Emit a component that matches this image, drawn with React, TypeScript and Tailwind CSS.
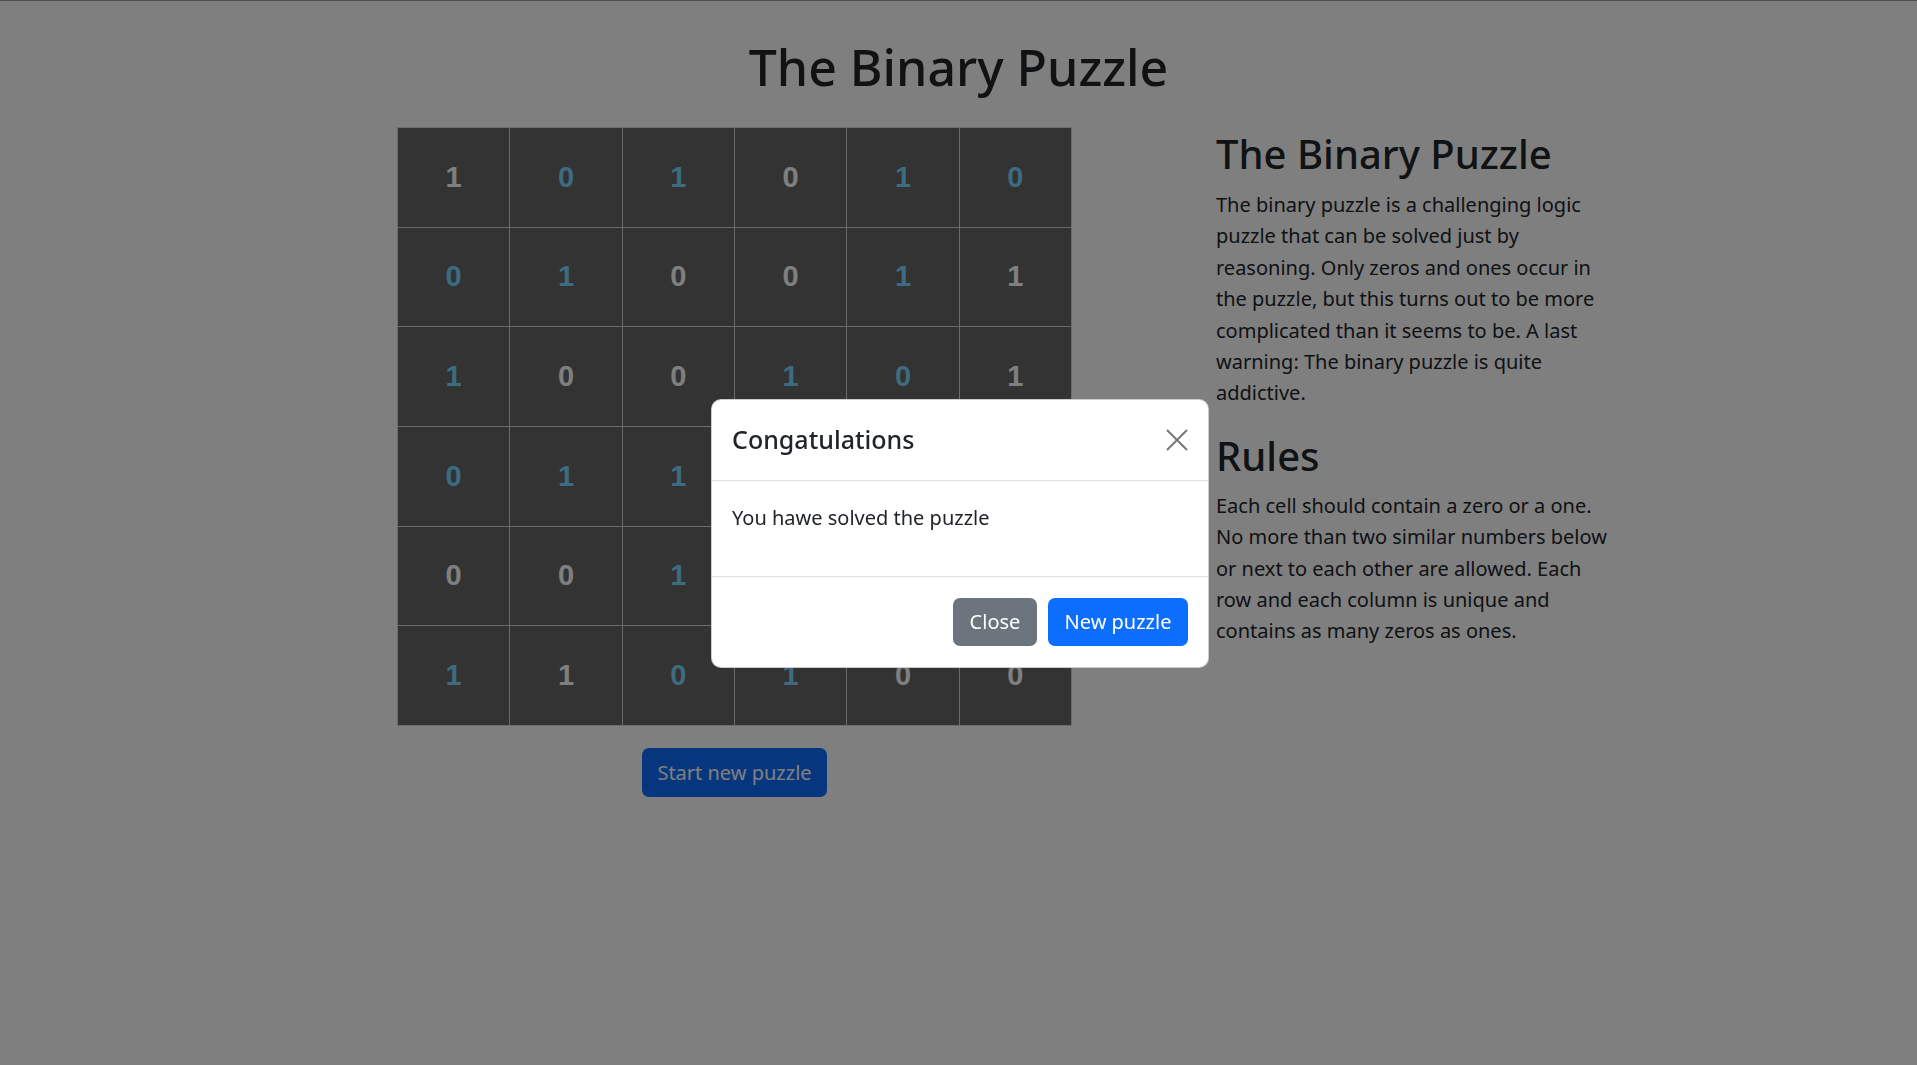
import React from "react";

type Cell = { v: number; fixed: boolean };

// fixed = given by the puzzle (white), otherwise filled in by the player (blue)
const board: Cell[][] = [
  [{ v: 1, fixed: true }, { v: 0, fixed: false }, { v: 1, fixed: false }, { v: 0, fixed: true }, { v: 1, fixed: false }, { v: 0, fixed: false }],
  [{ v: 0, fixed: false }, { v: 1, fixed: false }, { v: 0, fixed: true }, { v: 0, fixed: true }, { v: 1, fixed: false }, { v: 1, fixed: true }],
  [{ v: 1, fixed: false }, { v: 0, fixed: true }, { v: 0, fixed: true }, { v: 1, fixed: false }, { v: 0, fixed: false }, { v: 1, fixed: true }],
  [{ v: 0, fixed: false }, { v: 1, fixed: false }, { v: 1, fixed: false }, { v: 0, fixed: true }, { v: 1, fixed: false }, { v: 0, fixed: true }],
  [{ v: 0, fixed: true }, { v: 0, fixed: true }, { v: 1, fixed: false }, { v: 1, fixed: false }, { v: 0, fixed: true }, { v: 1, fixed: false }],
  [{ v: 1, fixed: false }, { v: 1, fixed: true }, { v: 0, fixed: false }, { v: 1, fixed: false }, { v: 0, fixed: true }, { v: 0, fixed: true }],
];

const App = () => {
  return (
    <div className="min-h-screen bg-white text-[#212529] font-['Noto_Sans',sans-serif]">
      <h1 className="pt-[37px] text-center text-[50px] leading-[60px] font-medium">
        The Binary Puzzle
      </h1>

      <div className="flex mt-[30px] pl-[397px] gap-[144px]">
        <div className="flex flex-col items-center w-[675px]">
          <div className="grid grid-cols-6 gap-px p-px w-[675px] h-[599px] bg-[#d6d6d6]">
            {board.flat().map((cell, i) => (
              <div
                key={i}
                className={
                  "flex items-center justify-center bg-[#666666] text-[29px] font-bold font-['Liberation_Sans',Arial,sans-serif] " +
                  (cell.fixed ? "text-white" : "text-[#7ad6ff]")
                }
              >
                {cell.v}
              </div>
            ))}
          </div>
          <button className="mt-[22px] w-[185px] h-[49px] rounded-[7px] bg-[#0d6efd] text-white text-[20px]">
            Start new puzzle
          </button>
        </div>

        <div className="w-[400px] pt-[3px] text-[20px] leading-[31.4px]">
          <h2 className="text-[40px] leading-[48px] font-medium mb-[11px]">
            The Binary Puzzle
          </h2>
          <p className="mb-[23px]">
            The binary puzzle is a challenging logic puzzle that can be solved
            just by reasoning. Only zeros and ones occur in the puzzle, but this
            turns out to be more complicated than it seems to be. A last
            warning: The binary puzzle is quite addictive.
          </p>
          <h2 className="text-[40px] leading-[48px] font-medium mb-[10px]">
            Rules
          </h2>
          <p>
            Each cell should contain a zero or a one. No more than two similar
            numbers below or next to each other are allowed. Each row and each
            column is unique and contains as many zeros as ones.
          </p>
        </div>
      </div>

      {/* backdrop */}
      <div className="fixed inset-0 bg-black/50" />
      <div className="fixed top-0 inset-x-0 h-px bg-[#4f4f4f]" />

      {/* modal */}
      <div className="fixed inset-0 flex justify-center items-start pt-[399px] pl-[3px]">
        <div className="w-[498px] bg-white rounded-[10px] border border-black/20 overflow-hidden">
          <div className="h-[81px] flex items-center justify-between pl-[20px] pr-[20px] border-b border-[#dee2e6]">
            <h5 className="text-[25px] font-medium">Congatulations</h5>
            <button className="w-[22px] h-[22px] flex items-center justify-center">
              <svg width="22" height="22" viewBox="0 0 22 22">
                <path d="M1 1L21 21M21 1L1 21" stroke="#777777" strokeWidth="2" />
              </svg>
            </button>
          </div>
          <div className="h-[96px] pl-[20px] pt-[22px] border-b border-[#dee2e6] text-[20px] leading-[30px]">
            You hawe solved the puzzle
          </div>
          <div className="h-[90px] flex items-center justify-end gap-[11px] pr-[20px]">
            <button className="w-[84px] h-[48px] rounded-[7px] bg-[#6c757d] text-white text-[20px]">
              Close
            </button>
            <button className="w-[140px] h-[48px] rounded-[7px] bg-[#0d6efd] text-white text-[20px]">
              New puzzle
            </button>
          </div>
        </div>
      </div>
    </div>
  );
};

export default App;
